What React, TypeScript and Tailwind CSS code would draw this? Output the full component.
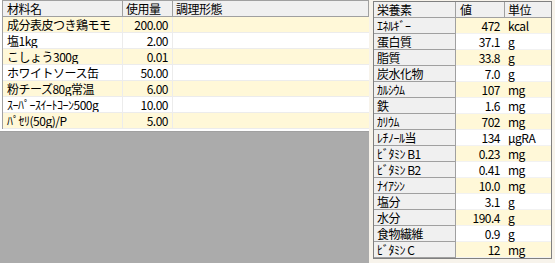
const materials: [string, string][] = [
  ["成分表皮つき鶏モモ", "200.00"],
  ["塩1kg", "2.00"],
  ["こしょう300g", "0.01"],
  ["ホワイトソース缶", "50.00"],
  ["粉チーズ80g常温", "6.00"],
  ["ｽｰﾊﾟｰｽｲｰﾄｺｰﾝ500g", "10.00"],
  ["ﾊﾟｾﾘ(50g)/P", "5.00"],
];

const nutrients: [string, string, string][] = [
  ["ｴﾈﾙｷﾞｰ", "472", "kcal"],
  ["蛋白質", "37.1", "g"],
  ["脂質", "33.8", "g"],
  ["炭水化物", "7.0", "g"],
  ["ｶﾙｼｳﾑ", "107", "mg"],
  ["鉄", "1.6", "mg"],
  ["ｶﾘｳﾑ", "702", "mg"],
  ["ﾚﾁﾉｰﾙ当", "134", "μgRA"],
  ["ﾋﾞﾀﾐﾝ B1", "0.23", "mg"],
  ["ﾋﾞﾀﾐﾝ B2", "0.41", "mg"],
  ["ﾅｲｱｼﾝ", "10.0", "mg"],
  ["塩分", "3.1", "g"],
  ["水分", "190.4", "g"],
  ["食物繊維", "0.9", "g"],
  ["ﾋﾞﾀﾐﾝ C", "12", "mg"],
];

export default function App() {
  return (
    <div
      className="flex h-[263px] w-[555px] overflow-hidden bg-[#f7f3eb] text-[12px] leading-[15px] tracking-[-0.5px] text-black"
      style={{ fontFamily: '"Noto Sans CJK JP", "Noto Sans", sans-serif' }}
    >
      {/* materials grid */}
      <div className="flex w-[369px] flex-col bg-[#ababab]">
        <div className="border-b border-[#a0a0a0] bg-white pb-[2px] pl-[2px]">
          <div className="border-l border-[#a0a0a0]">
            <div className="grid grid-cols-[120px_50px_1fr] border-y border-[#a0a0a0] bg-[#f0f0f0]">
              <div className="h-[15px] border-r border-[#a0a0a0] pl-[4px]">材料名</div>
              <div className="h-[15px] border-r border-[#a0a0a0] pl-[3px]">使用量</div>
              <div className="h-[15px] border-r border-[#a0a0a0] pl-[3px]">調理形態</div>
            </div>
            {materials.map(([name, qty], i) => (
              <div
                key={name}
                className={`grid grid-cols-[120px_50px_1fr] border-b border-[#ececec] ${
                  i % 2 === 0 ? "bg-[#fff8d8]" : "bg-white"
                }`}
              >
                <div className="h-[15px] truncate border-r border-[#ececec] pl-[4px]">{name}</div>
                <div className="h-[15px] border-r border-[#ececec] pr-[4px] text-right">{qty}</div>
                <div className="h-[15px]" />
              </div>
            ))}
          </div>
        </div>
      </div>

      {/* nutrients grid */}
      <div className="ml-[4px] mt-px w-[179px] self-start border border-[#808080] bg-white">
        <div className="grid grid-cols-[82px_49px_1fr] border-b border-[#a0a0a0] bg-[#f0f0f0]">
          <div className="h-[15px] border-r border-[#a0a0a0] pl-[3px]">栄養素</div>
          <div className="h-[15px] border-r border-[#a0a0a0] pl-[4px]">値</div>
          <div className="h-[15px] pl-[3px]">単位</div>
        </div>
        {nutrients.map(([name, val, unit], i) => (
          <div key={name} className="grid grid-cols-[82px_49px_1fr]">
            <div className="h-[16px] border-b border-r border-[#a0a0a0] bg-[#f0f0f0] pl-[3px]">
              {name}
            </div>
            <div
              className={`h-[16px] border-b border-[#f2f2f2] pr-[5px] text-right ${
                i % 2 === 0 ? "bg-[#fff8d8]" : "bg-white"
              }`}
            >
              {val}
            </div>
            <div
              className={`h-[16px] border-b border-[#f2f2f2] pl-[3px] ${
                i % 2 === 0 ? "bg-[#fff8d8]" : "bg-white"
              }`}
            >
              {unit}
            </div>
          </div>
        ))}
      </div>
    </div>
  );
}
